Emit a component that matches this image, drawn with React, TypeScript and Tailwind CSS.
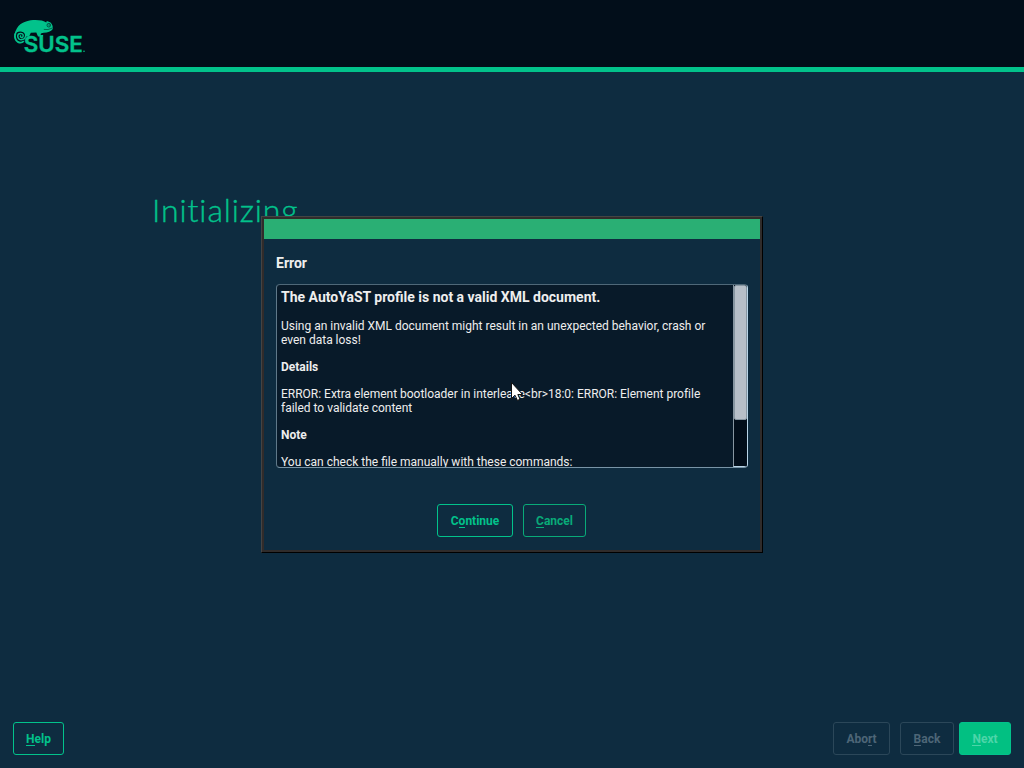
import type { ReactNode } from "react";

const FONT = "font-['Roboto','Liberation_Sans',sans-serif]";

function Hot({ children }: { children: ReactNode }) {
  return <span className="inline-block border-b border-current leading-[12px]">{children}</span>;
}

function Btn({ children, className }: { children: ReactNode; className: string }) {
  return (
    <button
      className={`flex h-[33px] shrink-0 items-center justify-center rounded-[3px] border text-[12px] leading-[14px] font-bold ${className}`}
    >
      <span>{children}</span>
    </button>
  );
}

function Logo() {
  return (
    <svg width="76" height="36" viewBox="0 0 76 36" fill="none" role="img" aria-label="SUSE">
      <g transform="translate(0.8 0.6)">
        <path
          d="M0.8 17 C1 8 7 3 13 1.6 C18 -0.2 29 -0.2 32.5 3 L33 1.5 C36 2.2 38 3.4 38.8 6.5 L39 9.5 C37 12 34 13.2 30 13.2 C28 13.3 27 13.6 26.8 15.3 L29.5 15.5 L29 17 L24.2 17 L22.5 12.8 L17 13.2 L15.3 16.8 L11.5 16.8 L12 14.8 C10 12 6 11 3 14 Z"
          fill="#02c28b"
        />
        <circle cx="35" cy="5.6" r="1.8" fill="#02c28b" stroke="#020e1a" strokeWidth="0.6" />
        <circle cx="35.3" cy="5.4" r="0.6" fill="#020e1a" />
        <path d="M30 9.8 Q34 10.8 38.6 8.4" stroke="#020e1a" strokeWidth="0.5" />
        <path
          d="M1.6 14.5 C1.8 10 10.5 9.8 11.8 14.5 C13 21 3.8 22 3.9 16.5 C4 12.8 9.8 13 9.4 16.4 C9 18.8 5.8 18.2 6.8 16.2"
          fill="#020e1a"
          stroke="#02c28b"
          strokeWidth="1.5"
          strokeLinecap="round"
        />
        <path d="M1.3 14 C0 23 7 24.5 10 21.5" stroke="#02c28b" strokeWidth="1.8" />
      </g>
      <text
        x="10.8"
        y="33.2"
        textLength="59"
        lengthAdjust="spacingAndGlyphs"
        fill="#02c28b"
        stroke="#02c28b"
        strokeWidth="0.4"
        className="font-['Inter',sans-serif] text-[21.5px] font-semibold"
      >
        SUSE
      </text>
      <circle cx="71" cy="32.3" r="0.8" fill="#02c28b" />
    </svg>
  );
}

export default function App() {
  return (
    <div className={`relative flex h-[768px] w-[1024px] flex-col overflow-hidden bg-[#0e2c40] ${FONT}`}>
      <header className="h-[72px] shrink-0 border-b-[5px] border-[#02c28b] bg-[#020e1a] pt-[19px] pl-[13px]">
        <Logo />
      </header>

      <main className="grow pt-[118px] pl-[152px]">
        <h1 className="font-['Lato',sans-serif] text-[32px] leading-[40px] font-light tracking-[0.9px] text-[#02c28b] [-webkit-text-stroke:0.4px_#02c28b]">
          Initializing
        </h1>
      </main>

      <footer className="flex shrink-0 px-[13px] pb-[13px]">
        <Btn className="w-[51px] border-[#02c28b] text-[#02c28b]">
          <Hot>H</Hot>elp
        </Btn>
        <Btn className="ml-auto w-[57px] border-[#2b4759] text-[#4d6677]">
          Abo<Hot>r</Hot>t
        </Btn>
        <Btn className="ml-[10px] w-[54px] border-[#2b4759] text-[#4d6677]">
          <Hot>B</Hot>ack
        </Btn>
        <Btn className="ml-[5px] w-[52px] border-[#02c28b] bg-[#02c082] text-[#4dd5a9]">
          <Hot>N</Hot>ext
        </Btn>
      </footer>

      <section
        role="dialog"
        className="absolute top-[216px] left-[261px] flex h-[337px] w-[502px] flex-col border border-t-[#444] border-r-black border-b-black border-l-[#444] bg-[#0e2c40]"
      >
        <div className="flex grow flex-col border-2 border-[#302c2b]">
          <div className="h-[20px] shrink-0 bg-[#2aaf74]" />
          <div className="flex grow flex-col px-[12px]">
            <h2 className="mt-[16px] text-[14px] leading-[16px] font-bold text-[#eeeeee]">Error</h2>
            <div className="mt-[13px] flex h-[184px] w-[472px] shrink-0 overflow-hidden rounded-[4px] border border-t-[#4f6878] border-r-[#b9d5e8] border-b-[#7894a6] border-l-[#607989] bg-[#081a29]">
              <div className="grow overflow-hidden pl-[4px] text-[12px] leading-[14px] whitespace-nowrap text-[#eeeeee]">
                <h3 className="mt-[4px] text-[14px] leading-[16px] font-bold">
                  The AutoYaST profile is not a valid XML document.
                </h3>
                <p className="mt-[14px] tracking-[-0.01px]">
                  Using an invalid XML document might result in an unexpected behavior, crash or
                  <br />
                  even data loss!
                </p>
                <h4 className="mt-[13px] font-bold">Details</h4>
                <p className="mt-[13px] tracking-[-0.01px]">
                  ERROR: Extra element bootloader in interleave&lt;br&gt;18:0: ERROR: Element profile
                  <br />
                  failed to validate content
                </p>
                <h4 className="mt-[13px] font-bold">Note</h4>
                <p className="mt-[13px]">You can check the file manually with these commands:</p>
              </div>
              <div className="w-[14px] shrink-0 border-b border-l border-b-[#b9d5e8] border-l-[#8796a1] bg-[#020e1a]">
                <div className="h-[135px] rounded-[2px] border border-[#8796a1] bg-[#b7bfc8]" />
              </div>
            </div>
            <div className="mt-[36px] ml-[161px] flex gap-[10px]">
              <Btn className="w-[76px] border-[#02c28b] text-[#02c28b]">
                C<Hot>o</Hot>ntinue
              </Btn>
              <Btn className="w-[63px] border-[#09aa78] text-[#09aa78]">
                <Hot>C</Hot>ancel
              </Btn>
            </div>
          </div>
        </div>
      </section>

      <svg className="absolute top-[381px] left-[509px]" width="16" height="22" viewBox="0 0 16 22">
        <path
          d="M2.5 1.5 V17.5 L6 14.2 L8.5 19.5 L11 18.2 L8.8 13.5 H13.5 Z"
          fill="#fff"
          stroke="#111"
          strokeWidth="1"
        />
      </svg>
    </div>
  );
}
